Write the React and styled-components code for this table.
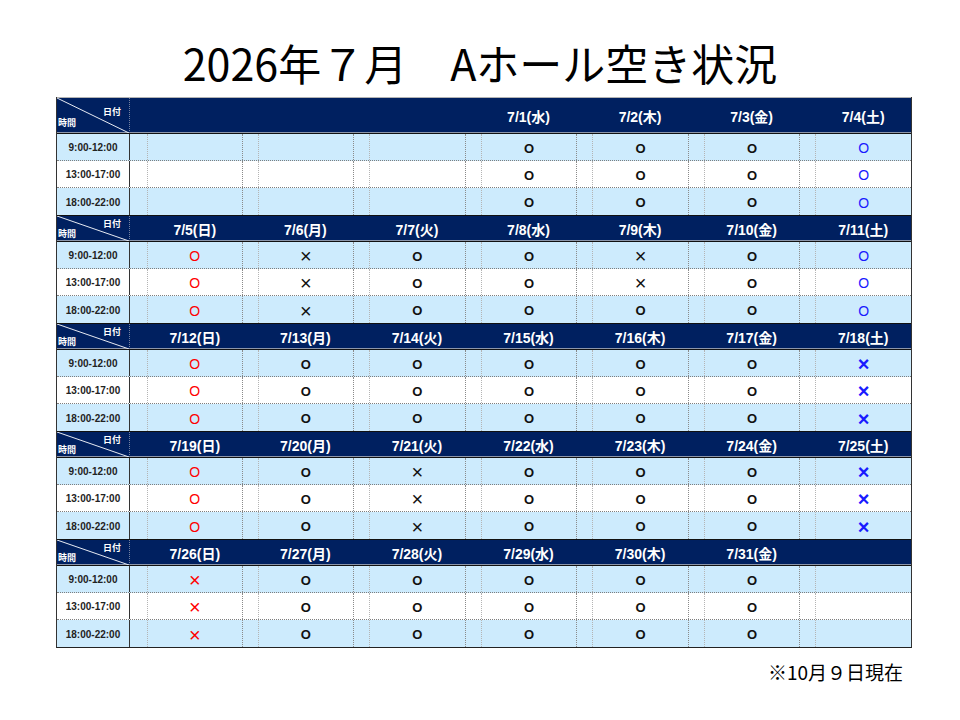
import React from "react";
import styled, { createGlobalStyle, css } from "styled-components";

const GlobalStyle = createGlobalStyle`
  html, body {
    margin: 0;
    padding: 0;
    background: #fff;
  }
  body {
    font-family: "Liberation Sans", "Noto Sans CJK JP", sans-serif;
  }
`;

const weeks = [
  {
    days: [null, null, null, "7/1(水)", "7/2(木)", "7/3(金)", "7/4(土)"],
    marks: ["", "", "", "ooo", "ooo", "ooo", "ooo"],
    tall: true,
  },
  {
    days: ["7/5(日)", "7/6(月)", "7/7(火)", "7/8(水)", "7/9(木)", "7/10(金)", "7/11(土)"],
    marks: ["ooo", "xxx", "ooo", "ooo", "xxo", "ooo", "ooo"],
  },
  {
    days: ["7/12(日)", "7/13(月)", "7/14(火)", "7/15(水)", "7/16(木)", "7/17(金)", "7/18(土)"],
    marks: ["ooo", "ooo", "ooo", "ooo", "ooo", "ooo", "xxx"],
  },
  {
    days: ["7/19(日)", "7/20(月)", "7/21(火)", "7/22(水)", "7/23(木)", "7/24(金)", "7/25(土)"],
    marks: ["ooo", "ooo", "xxx", "ooo", "ooo", "ooo", "xxx"],
  },
  {
    days: ["7/26(日)", "7/27(月)", "7/28(火)", "7/29(水)", "7/30(木)", "7/31(金)", null],
    marks: ["xxx", "ooo", "ooo", "ooo", "ooo", "ooo", ""],
  },
];

const slots = ["9:00-12:00", "13:00-17:00", "18:00-22:00"];

// column 0 is Sunday, column 6 is Saturday
const toneOf = (col) => (col === 0 ? "sun" : col === 6 ? "sat" : "plain");

const App = () => {
  return (
    <Page>
      <GlobalStyle />
      <Title>2026年７月　Aホール空き状況</Title>
      <Table>
        {weeks.map((week, w) => (
          <Block key={w}>
            <HeadRow $tall={week.tall} $first={w === 0}>
              <Corner>
                <CornerLine preserveAspectRatio="none" viewBox="0 0 100 100">
                  <line
                    x1="0"
                    y1="0"
                    x2="100"
                    y2="100"
                    stroke="#e6eaf2"
                    strokeWidth="1"
                    vectorEffect="non-scaling-stroke"
                  />
                </CornerLine>
                <DateLabel $tall={week.tall}>日付</DateLabel>
                <TimeLabel $tall={week.tall}>時間</TimeLabel>
              </Corner>
              {week.days.map((d, i) => (
                <DateCell key={i} $first={i === 0}>
                  {d}
                </DateCell>
              ))}
            </HeadRow>
            {slots.map((slot, r) => (
              <DataRow
                key={slot}
                $shaded={r !== 1}
                $last={r === slots.length - 1}
              >
                <TimeCell>{slot}</TimeCell>
                {week.marks.map((m, i) => (
                  <SlotCell key={i} $first={i === 0}>
                    <Gutter $first={i === 0} />
                    <Slot>
                      {m && (
                        <Mark $kind={m[r]} $tone={toneOf(i)}>
                          {m[r] === "o" ? "O" : "×"}
                        </Mark>
                      )}
                    </Slot>
                  </SlotCell>
                ))}
              </DataRow>
            ))}
          </Block>
        ))}
      </Table>
      <Note>※10月９日現在</Note>
    </Page>
  );
};

const Page = styled.div`
  width: 960px;
  height: 720px;
  box-sizing: border-box;
  padding-top: 38px;
  display: flex;
  flex-direction: column;
`;

const Title = styled.h1`
  margin: 0 0 11px;
  text-align: center;
  font-family: "Noto Sans CJK JP", sans-serif;
  font-weight: 400;
  font-size: 43px;
  line-height: 48px;
  color: #000;
`;

const Table = styled.div`
  margin-left: 56px;
  width: 856px;
  box-sizing: border-box;
  border-left: 1px solid #333;
  border-right: 1px solid #333;
  border-bottom: 1px solid #222;
`;

const Block = styled.div``;

const HeadRow = styled.div`
  display: grid;
  grid-template-columns: 73px repeat(7, 1fr);
  height: ${({ $tall }) => ($tall ? 37 : 27)}px;
  box-sizing: border-box;
  background: #002060;
  border-top: 1px solid ${({ $first }) => ($first ? "#b4b4b4" : "#111")};
  border-bottom: 1px solid #111;
  box-shadow: inset 0 -1px 0 #8c96aa;
`;

const Corner = styled.div`
  position: relative;
  border-right: 1px dotted #7482a0;
  color: #fff;
  font-size: 9px;
  font-weight: 700;
  font-family: "Noto Sans CJK JP", sans-serif;
  line-height: 1;
`;

const CornerLine = styled.svg`
  position: absolute;
  inset: 0;
  width: 100%;
  height: 100%;
`;

const DateLabel = styled.span`
  position: absolute;
  right: 8px;
  bottom: ${({ $tall }) => ($tall ? 17 : 13)}px;
`;

const TimeLabel = styled.span`
  position: absolute;
  left: 1px;
  bottom: ${({ $tall }) => ($tall ? 6 : 3)}px;
`;

const DateCell = styled.div`
  display: flex;
  align-items: center;
  justify-content: center;
  padding-left: ${({ $first }) => ($first ? 18 : 16)}px;
  padding-top: 1px;
  color: #fff;
  font-size: 14px;
  font-weight: 700;
  white-space: nowrap;
`;

const DataRow = styled.div`
  display: grid;
  grid-template-columns: 73px repeat(7, 1fr);
  height: 27px;
  box-sizing: border-box;
  background: ${({ $shaded }) => ($shaded ? "#cdebfd" : "#fff")};
  border-bottom: ${({ $last }) => ($last ? "none" : "1px dotted #7e7e7e")};
`;

const TimeCell = styled.div`
  display: flex;
  align-items: center;
  justify-content: center;
  padding-top: 1px;
  border-right: 1px solid #333;
  color: #222;
  font-size: 10px;
  font-weight: 700;
`;

const SlotCell = styled.div`
  display: flex;
  border-left: ${({ $first }) => ($first ? "none" : "1px dotted #8a8a8a")};
`;

const Gutter = styled.div`
  width: ${({ $first }) => ($first ? 17 : 15)}px;
  border-right: 1px dotted #b4b4b4;
`;

const Slot = styled.div`
  flex: 1;
  display: flex;
  align-items: center;
  justify-content: center;
  padding-top: 2px;
`;

const toneColors = {
  sun: "#ff0000",
  sat: "#1a1aff",
  plain: "#111",
};

const Mark = styled.span`
  font-family: "Liberation Sans", sans-serif;
  line-height: 1;
  color: ${({ $tone }) => toneColors[$tone]};
  ${({ $kind, $tone }) =>
    $kind === "o"
      ? css`
          font-size: ${$tone === "plain" ? 13 : 14}px;
          font-weight: ${$tone === "plain" ? 700 : 400};
        `
      : css`
          font-size: 20px;
          font-weight: ${$tone === "sat" ? 700 : 400};
        `}
`;

const Note = styled.div`
  margin-top: 12px;
  padding-right: 57px;
  text-align: right;
  font-family: "Noto Sans CJK JP", sans-serif;
  font-size: 19px;
  line-height: 24px;
  color: #000;
`;

export default App;
